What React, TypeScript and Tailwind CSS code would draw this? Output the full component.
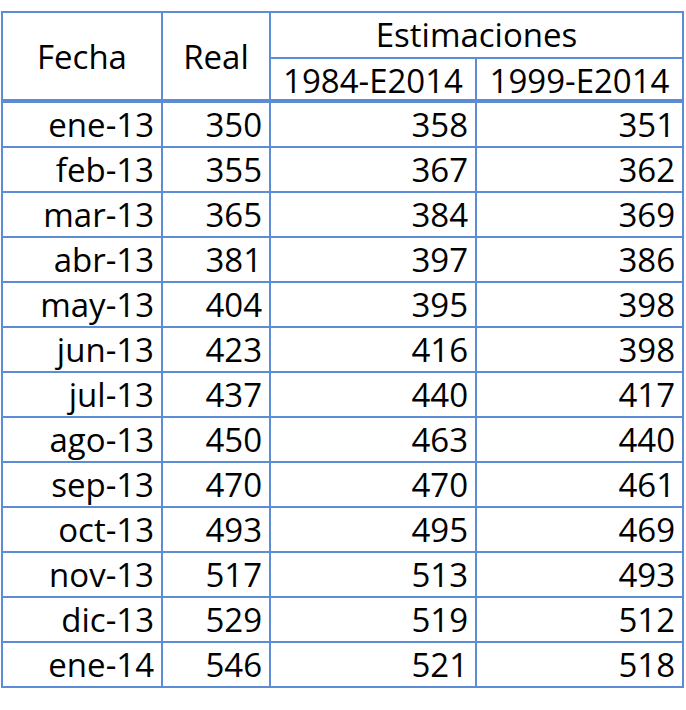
import React from "react";

const rows: [string, string, string, string][] = [
  ["ene-13", "350", "358", "351"],
  ["feb-13", "355", "367", "362"],
  ["mar-13", "365", "384", "369"],
  ["abr-13", "381", "397", "386"],
  ["may-13", "404", "395", "398"],
  ["jun-13", "423", "416", "398"],
  ["jul-13", "437", "440", "417"],
  ["ago-13", "450", "463", "440"],
  ["sep-13", "470", "470", "461"],
  ["oct-13", "493", "495", "469"],
  ["nov-13", "517", "513", "493"],
  ["dic-13", "529", "519", "512"],
  ["ene-14", "546", "521", "518"],
];

export default function App() {
  return (
    <div className="w-[686px] h-[710px] bg-white text-black" style={{ fontFamily: '"Open Sans", "Noto Sans", sans-serif' }}>
      <div className="pt-[11px] pl-[1px]">
        <div className="w-fit border-l-2 border-t-2 border-[#5b8cd4] text-[33px] leading-none">
          <div className="grid grid-cols-[160px_108px_206px_207px] grid-rows-[46px_44px]">
            <div className="row-span-2 flex items-center justify-center border-r-2 border-b-[4px] border-[#5b8cd4]">Fecha</div>
            <div className="row-span-2 flex items-center justify-center border-r-2 border-b-[4px] border-[#5b8cd4]">Real</div>
            <div className="col-span-2 flex items-center justify-center border-r-2 border-b-2 border-[#5b8cd4] pb-[2px]">Estimaciones</div>
            <div className="flex items-center justify-center border-r-2 border-b-[4px] border-[#5b8cd4] pt-[2px]">1984-E2014</div>
            <div className="flex items-center justify-center border-r-2 border-b-[4px] border-[#5b8cd4] pt-[2px]">1999-E2014</div>
          </div>
          {rows.map((r) => (
            <div key={r[0]} className="grid grid-cols-[160px_108px_206px_207px] h-[45px]">
              {r.map((c, i) => (
                <div key={i} className="flex items-center justify-end border-r-2 border-b-2 border-[#5b8cd4] pr-[7px] pb-[1px]">
                  {c}
                </div>
              ))}
            </div>
          ))}
        </div>
      </div>
    </div>
  );
}
